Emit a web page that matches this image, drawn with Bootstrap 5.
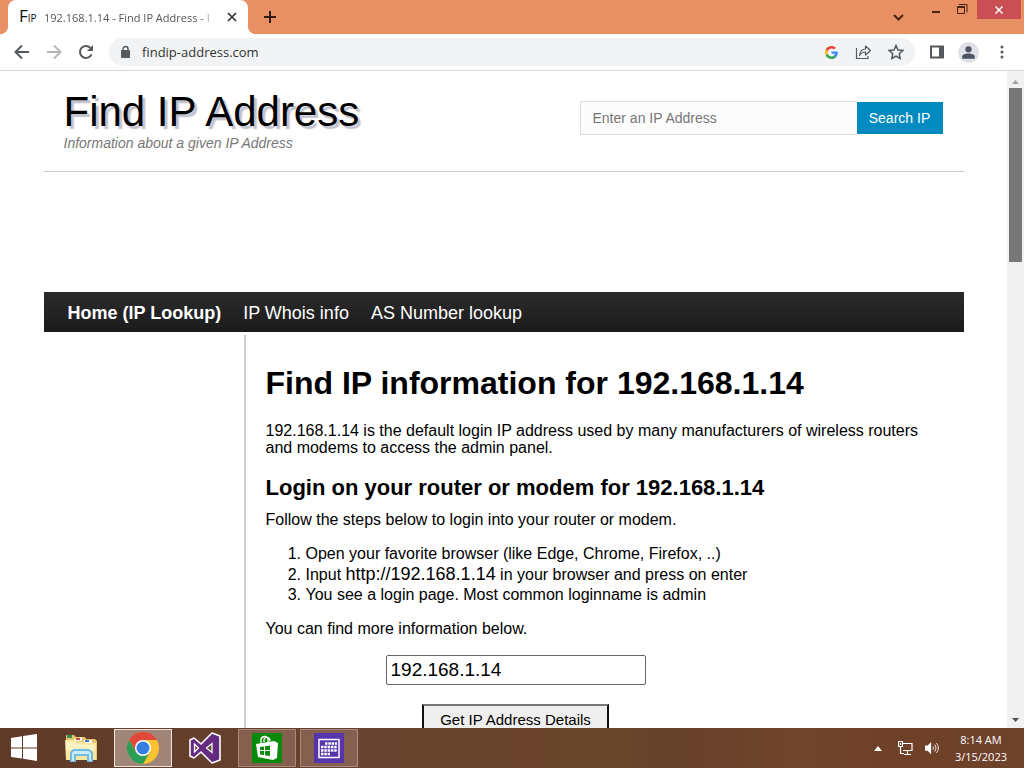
<!DOCTYPE html>
<html lang="en">
<head>
<meta charset="utf-8">
<meta name="viewport" content="width=device-width, initial-scale=1">
<title>192.168.1.14 - Find IP Address</title>
<link href="https://cdn.jsdelivr.net/npm/bootstrap@5.3.0/dist/css/bootstrap.min.css" rel="stylesheet">
<script src="https://cdn.jsdelivr.net/npm/bootstrap@5.3.0/dist/js/bootstrap.bundle.min.js"></script>
<style>
  body { font-family: "Liberation Sans", Arial, sans-serif; font-size: 16px; line-height: 17px; color: #000; background: #fff; }
  svg { display: block; flex: none; }
  .chrome-ui { font-family: "Open Sans", "Noto Sans", sans-serif; }
  .plain-btn { border: 0; background: none; padding: 0; }

  .tab-strip { height: 34px; background: #e89063; padding-left: 8px; }
  .browser-tab { width: 240px; background: #fff; border-radius: 8px 8px 0 0; padding: 0 9px 0 11px; gap: 8px; font-size: 11px; color: #555; }
  .browser-tab::before, .browser-tab::after { content: ""; position: absolute; bottom: 0; width: 8px; height: 8px; }
  .browser-tab::before { left: -8px; background: radial-gradient(circle at 0 0, transparent 8px, #fff 8px); }
  .browser-tab::after { right: -8px; background: radial-gradient(circle at 100% 0, transparent 8px, #fff 8px); }
  .favicon { width: 17px; font-size: 17px; line-height: 22px; color: #111; }
  .favicon small { font-size: 10px; }
  .tab-title { -webkit-mask-image: linear-gradient(90deg, #000 90%, transparent); mask-image: linear-gradient(90deg, #000 90%, transparent); }
  .win-close { width: 44px; height: 19px; background: #c94f55; margin-right: 3px; }

  .toolbar { height: 37px; border-bottom: 1px solid #d5d7da; padding: 0 12px; }
  .address-bar { height: 28px; border-radius: 14px; background: #f1f3f4; padding: 0 11px; margin: 0 14px 0 13px; }
  .address-bar input { border: 0; background: none; outline: 0; padding: 0; font-size: 13px; color: #333; min-width: 0; margin-left: 10px; }
  .toolbar-end { gap: 13px; }

  .scroll-track { width: 17px; background: #f1f1f1; padding: 9px 0 6px; }
  .scroll-thumb { width: 13px; height: 174px; background: #777; margin-top: 4px; }

  .site { max-width: 920px; }
  .site-head { height: 101px; border-bottom: 1px solid #ccc; padding: 17px 20px 0; }
  .site-name { font-size: 42px; line-height: 48px; text-shadow: 3px 3px 1px #c3c3cf; }
  .tagline { font-size: 14px; line-height: 14px; color: #777; }
  .search-box { width: 363px; height: 34px; margin: 13px 1px 0 0; }
  .search-box input { border: 1px solid #ddd; border-right: 0; padding: 0 12px; font-size: 14px; min-width: 0; background: #fcfcfc; }
  .search-box input::placeholder { color: #777; }
  .search-box button { width: 86px; border: 0; background: #008abf; color: #fff; font-size: 14px; margin: 1px 0; }
  .ad-space { height: 120px; }
  .site-nav { height: 40px; background: linear-gradient(#2b2b2b, #1b1b1b); padding: 2px 24px 0; gap: 22px; font-size: 18px; line-height: 24px; }
  .site-nav a { color: #fff; text-decoration: none; }
  .side-space { width: 200px; }
  .article { border-left: 2px solid #ccc; padding: 31px 20px 0; margin-top: 3px; }
  .article h1 { font-size: 32px; line-height: 34px; font-weight: 700; margin-bottom: 22px; }
  .article h2 { font-size: 22px; line-height: 26px; font-weight: 700; margin: 19px 0 10px; }
  .article p { margin-bottom: 16px; }
  .article ol { padding-left: 40px; line-height: 20px; margin-bottom: 15px; }
  .router-url { font-size: 18px; }
  .lookup-form { max-width: 500px; gap: 19px; margin-top: 18px; padding-bottom: 20px; }
  .ip-field { width: 260px; height: 30px; border: 1px solid #666; border-radius: 2px; font-size: 19px; padding: 0 4px; }
  .details-btn { width: 187px; height: 30px; font-size: 15px; background: #efefef; border: 2px solid #111; border-top-color: #777; color: #000; }

  .taskbar { height: 40px; background: linear-gradient(90deg, #603a28 0%, #68432f 35%, #68422a 50%, #6a472c 60%, #65402a 65%, #70452b 78%, #6f3f27 90%, #6d432c 100%); color: #fff; font-size: 11px; line-height: 17px; }
  .task-list { gap: 4px; margin-left: -9px; }
  .task-list button:first-child { margin-right: -1px; }
  .task-btn { width: 58px; height: 38px; border: 1px solid transparent; background: none; padding: 0; }
  .task-open { border-color: #a98a7c; background: #85604f; }
  .task-active { border-color: #efe5df; background: #a08578; }
  .tray { gap: 12px; padding-right: 17px; }
</style>
</head>
<body class="vh-100 d-flex flex-column overflow-hidden">
<header class="chrome-ui flex-shrink-0">
  <div class="tab-strip d-flex">
    <div class="browser-tab position-relative d-flex align-items-center">
      <span class="favicon d-flex align-items-baseline">F<small>IP</small></span>
      <span class="tab-title flex-fill text-nowrap">192.168.1.14 - Find IP Address - I</span>
      <button class="plain-btn" aria-label="Close tab"><svg width="14" height="14" viewBox="0 0 14 14"><path d="M3 3l8 8M11 3l-8 8" stroke="#333" stroke-width="1.7"/></svg></button>
    </div>
    <button class="plain-btn ms-3" aria-label="New tab"><svg width="12" height="34" viewBox="0 0 12 34"><path d="M0 17h12M6 11v12" stroke="#321a10" stroke-width="2"/></svg></button>
    <div class="ms-auto d-flex align-items-start">
      <button class="plain-btn" aria-label="Search tabs"><svg width="34" height="34" viewBox="0 0 34 34"><path d="M13 15l4.500 4.500 4.500-4.500" fill="none" stroke="#48230f" stroke-width="2"/></svg></button>
      <button class="plain-btn" aria-label="Minimize"><svg width="26" height="22" viewBox="0 0 26 22"><path d="M17 12h8" stroke="#48230f" stroke-width="2"/></svg></button>
      <button class="plain-btn me-2" aria-label="Restore"><svg width="28" height="22" viewBox="0 0 28 22"><path d="M16.500 6.500h7v7h-7zM16 7.500h8M18 4.500h8v8" fill="none" stroke="#48230f"/></svg></button>
      <button class="win-close plain-btn d-flex align-items-center justify-content-center" aria-label="Close"><svg width="10" height="10" viewBox="0 0 10 10"><path d="M1.500 1.500l7 7M8.500 1.500l-7 7" stroke="#fff" stroke-width="1.500"/></svg></button>
    </div>
  </div>
  <div class="toolbar d-flex align-items-center">
    <button class="plain-btn" aria-label="Back"><svg width="20" height="20" viewBox="0 0 20 20"><path d="M17 10H4M10 3.500L3.500 10l6.500 6.500" fill="none" stroke="#55585c" stroke-width="2"/></svg></button>
    <button class="plain-btn ms-2 me-1" aria-label="Forward"><svg width="32" height="20" viewBox="-2 0 32 20"><path d="M5 10h13M12 3.500l6.500 6.500-6.500 6.500" fill="none" stroke="#b4b6b8" stroke-width="2"/></svg></button>
    <button class="plain-btn" aria-label="Reload"><svg width="20" height="20" viewBox="0 0 20 20"><path d="M15.500 12.300A6 6 0 1 1 14.300 5.800" fill="none" stroke="#55585c" stroke-width="2"/><path d="M17 3v6h-6z" fill="#55585c"/></svg></button>
    <div class="address-bar flex-fill d-flex align-items-center">
      <svg width="12" height="14" viewBox="0 0 12 14"><rect x="1" y="5" width="9" height="8" rx="1" fill="#55585c"/><path d="M3 6V4a2.500 2.500 0 0 1 5 0v2" fill="none" stroke="#55585c" stroke-width="1.400"/></svg>
      <input class="flex-fill" aria-label="Address" value="findip-address.com">
      <svg width="13" height="13" viewBox="0 0 48 48"><path fill="#EA4335" d="M24 9.500c3.540 0 6.710 1.220 9.210 3.600l6.850-6.850C35.900 2.380 30.470 0 24 0 14.620 0 6.510 5.380 2.560 13.220l7.980 6.190C12.430 13.720 17.740 9.500 24 9.500z"/><path fill="#4285F4" d="M46.980 24.550c0-1.570-.15-3.090-.38-4.550H24v9.020h12.940c-.58 2.960-2.260 5.480-4.780 7.180l7.730 6c4.510-4.180 7.090-10.360 7.090-17.650z"/><path fill="#FBBC05" d="M10.530 28.590A14.500 14.500 0 0 1 10.540 19.410l-7.980-6.190a24 24 0 0 0 0 21.560z"/><path fill="#34A853" d="M24 48c6.480 0 11.930-2.130 15.890-5.810l-7.730-6C30.010 37.640 27.240 38.490 24 38.490c-6.260 0-11.570-4.220-13.470-9.910l-7.970 6.200C6.510 42.620 14.620 48 24 48z"/></svg>
      <svg class="ms-3" width="18" height="16" viewBox="0 0 18 16"><path d="M2.500 4v10.500H14V12M5.500 11.500c.5-4.500 3-6.500 6-6.500V2l5 4.500-5 4.500V8c-3 0-4.500 1-6 3.500z" fill="none" stroke="#55585c" stroke-width="1.200" stroke-linejoin="round"/></svg>
      <svg class="ms-3" width="16" height="16" viewBox="0 0 16 16"><path d="M8 1.500l2 4.500 4.800.5-3.600 3.200 1 4.800L8 12l-4.200 2.500 1-4.800L1.200 6.500 6 6z" fill="none" stroke="#55585c" stroke-width="1.500"/></svg>
    </div>
    <div class="toolbar-end d-flex align-items-center">
      <svg width="16" height="16" viewBox="0 0 16 16"><path d="M2 2.500h12v11H2z" fill="none" stroke="#55585c" stroke-width="2"/><path d="M10 2h4v12h-4z" fill="#55585c"/></svg>
      <svg width="21" height="21" viewBox="0 0 20 20"><circle cx="10" cy="10" r="10" fill="#dfe1e7"/><circle cx="10" cy="7" r="3" fill="#4d5264"/><path d="M4 16v-2c0-4 12-4 12 0v2z" fill="#4d5264"/></svg>
      <svg class="ms-2 me-2" width="4" height="16" viewBox="0 0 4 16"><g fill="#55585c"><circle cx="2" cy="3" r="1.500"/><circle cx="2" cy="8" r="1.500"/><circle cx="2" cy="13" r="1.500"/></g></svg>
    </div>
  </div>
</header>

<div class="d-flex flex-fill overflow-hidden">
  <main class="flex-fill overflow-hidden">
    <div class="site mx-auto">
      <div class="site-head d-flex justify-content-between">
        <div>
          <div class="site-name">Find IP Address</div>
          <div class="tagline fst-italic">Information about a given IP Address</div>
        </div>
        <form class="search-box d-flex">
          <input class="flex-fill" type="text" placeholder="Enter an IP Address" aria-label="Enter an IP Address">
          <button type="button">Search IP</button>
        </form>
      </div>
      <div class="ad-space"></div>
      <nav class="site-nav d-flex align-items-center">
        <a class="fw-bold" href="#">Home (IP Lookup)</a>
        <a href="#">IP Whois info</a>
        <a href="#">AS Number lookup</a>
      </nav>
      <div class="d-flex">
        <aside class="side-space flex-shrink-0"></aside>
        <article class="article flex-fill">
          <h1>Find IP information for 192.168.1.14</h1>
          <p>192.168.1.14 is the default login IP address used by many manufacturers of wireless routers and modems to access the admin panel.</p>
          <h2>Login on your router or modem for 192.168.1.14</h2>
          <p>Follow the steps below to login into your router or modem.</p>
          <ol>
            <li>Open your favorite browser (like Edge, Chrome, Firefox, ..)</li>
            <li>Input <span class="router-url">http://192.168.1.14</span> in your browser and press on enter</li>
            <li>You see a login page. Most common loginname is admin</li>
          </ol>
          <p>You can find more information below.</p>
          <form class="lookup-form d-flex flex-column align-items-center">
            <input class="ip-field" type="text" value="192.168.1.14" aria-label="IP address">
            <button class="details-btn" type="button">Get IP Address Details</button>
          </form>
        </article>
      </div>
    </div>
  </main>
  <div class="scroll-track d-flex flex-column align-items-center flex-shrink-0">
    <svg width="7" height="4" viewBox="0 0 7 4"><path d="M0 4l3.500-4L7 4z" fill="#a3a3a3"/></svg>
    <div class="scroll-thumb"></div>
    <svg class="mt-auto" width="7" height="4" viewBox="0 0 7 4"><path d="M0 0l3.500 4L7 0z" fill="#505050"/></svg>
  </div>
</div>

<footer class="taskbar chrome-ui d-flex align-items-center justify-content-between flex-shrink-0">
  <div class="task-list d-flex">
    <button class="task-btn d-flex align-items-center justify-content-center" aria-label="Start">
      <svg class="ms-2" width="28" height="28" viewBox="0 0 28 28"><path d="M1 4l11-1.700V13.400H1zM13 2.100L27 0v13.400H13zM1 14.400h11v10.100L1 23zM13 14.400h14V27l-14-2.200z" fill="#fff"/></svg>
    </button>
    <button class="task-btn d-flex align-items-center justify-content-center" aria-label="File Explorer">
      <svg width="34" height="32" viewBox="0 0 34 32"><path d="M2 28V3h8l2 2h9l1 2h9l2 2v19z" fill="#e8c56b"/><path d="M3 6V3h5v3z" fill="#2f9350"/><path d="M10 7l8-2v4h-8z" fill="#fff"/><path d="M12 6h4v2h-4z" fill="#c74a38"/><path d="M20 8h8v3h-8z" fill="#fff"/><path d="M21 8h4v2h-4z" fill="#3e78bd"/><path d="M1 8h10l2 2h8l2 1h9v17H2z" fill="#f8e7a0"/><path d="M2 10h9l2 2h8l2 1h8v5H2z" fill="#fdf2c2"/><path d="M6 30V20l3-3h16l4 3v10h-6v-6H12v6z" fill="#72bce4"/><path d="M8 29v-8l2-2h14l3 2v8h-2v-7H10v7z" fill="#c9ebfa"/></svg>
    </button>
    <button class="task-btn task-active d-flex align-items-center justify-content-center" aria-label="Chrome">
      <svg width="32" height="32" viewBox="0 0 32 32"><circle cx="16" cy="16" r="16" fill="#f9c42f"/><path d="M2.140 8A16 16 0 0 1 29.860 8H16L9 20z" fill="#e2483a"/><path d="M2.140 8A16 16 0 0 0 16 32l7-12H9z" fill="#2c9d57"/><circle cx="16" cy="16" r="8" fill="#fff"/><circle cx="16" cy="16" r="6.500" fill="#367de0"/></svg>
    </button>
    <button class="task-btn d-flex align-items-center justify-content-center" aria-label="Visual Studio">
      <svg width="34" height="34" viewBox="0 0 34 34"><path d="M2 9l4-2 7 6L24 2l8 3v24l-8 3-11-11-7 6-4-2z" fill="#642a80" stroke="#fff" stroke-width="1.600" stroke-linejoin="round"/><path d="M6.500 13v8l4-4zM24 12.500v9l-5.500-4.500z" fill="#6b4433" stroke="#fff" stroke-width="1.300"/></svg>
    </button>
    <button class="task-btn task-open d-flex align-items-center justify-content-center" aria-label="Store">
      <svg width="30" height="30" viewBox="0 0 30 30"><path d="M0 0h30v30H0z" fill="#098a0b"/><path d="M4 11l18-3 4 2-1 15-4 2L6 24z" fill="#fff"/><path d="M9 10V7c0-4 6-5 7-1v3M12 9V7c0-4 6-3 6 1" fill="none" stroke="#fff" stroke-width="1.300"/><path d="M8 14l4-.6V17H8zM13 13.300l5-.7V17h-5zM8 18h4v4l-4-.6zM13 18h5v5l-5-.8z" fill="#098a0b"/></svg>
    </button>
    <button class="task-btn task-open d-flex align-items-center justify-content-center" aria-label="Calendar">
      <svg width="30" height="30" viewBox="0 0 30 30"><path d="M0 0h30v30H0z" fill="#5534ac"/><path d="M5 6.500h20v18H5z" fill="none" stroke="#fff" stroke-width="1.500"/><path d="M11 10.500h12M7 14h16M7 17.500h16M7 21h9" stroke="#fff" stroke-width="2.500" stroke-dasharray="2.500 .8"/></svg>
    </button>
  </div>
  <div class="tray d-flex align-items-center">
    <svg width="8" height="5" viewBox="0 0 8 5"><path d="M0 5l4-5 4 5z" fill="#fff"/></svg>
    <svg class="ms-1" width="15" height="15" viewBox="0 0 15 15"><path d="M5 2.500h9v7H5M9.500 10v3M6 13.500h7M2.500 6v6.500H6M.5.500h4v5h-4zM2.500 2v2" fill="none" stroke="#fff" stroke-width="1.200"/></svg>
    <svg class="me-1" width="14" height="14" viewBox="0 0 16 14"><path d="M0 4h3l4-4v14l-4-4H0z" fill="#fff"/><path d="M9 5c1 1 1 3 0 4M11 3c2 2 2 6 0 8M13 1.500c3 3 3 8 0 11" fill="none" stroke="#fff"/></svg>
    <div class="text-center">8:14 AM<br>3/15/2023</div>
  </div>
</footer>
</body>
</html>
